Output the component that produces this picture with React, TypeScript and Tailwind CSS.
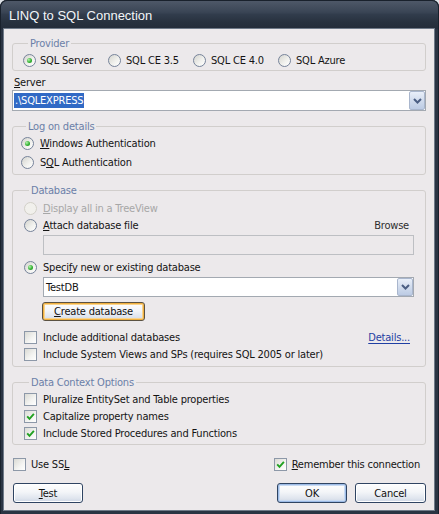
import React from "react";

const UI_FONT = "font-['DejaVu_Sans_Condensed','Liberation_Sans',sans-serif]";

function Radio({ checked = false, disabled = false }: { checked?: boolean; disabled?: boolean }) {
  if (disabled) {
    return <span className="block h-[13px] w-[13px] shrink-0 rounded-full border border-[#d2d0c8] bg-[#f1f0ec]" />;
  }
  return (
    <span className="flex h-[13px] w-[13px] shrink-0 items-center justify-center rounded-full border border-[#76839a] bg-[linear-gradient(135deg,#d4d4ce_0%,#f2f2ef_60%,#ffffff_100%)]">
      {checked && (
        <span className="h-[5px] w-[5px] rounded-full bg-[radial-gradient(circle_at_35%_35%,#b6f3ae_0%,#34b234_55%,#1b8c1b_100%)]" />
      )}
    </span>
  );
}

function Check({ checked = false }: { checked?: boolean }) {
  return (
    <span className="flex h-[13px] w-[13px] shrink-0 items-center justify-center border border-[#8d98a8] bg-[linear-gradient(135deg,#dadad4_0%,#f4f4f2_60%,#ffffff_100%)]">
      {checked && (
        <svg width="9" height="9" viewBox="0 0 9 9">
          <path d="M1.2 4.4 L3.5 6.8 L7.9 1.9" fill="none" stroke="#21a121" strokeWidth="1.9" />
        </svg>
      )}
    </span>
  );
}

function Key({ children }: { children: React.ReactNode }) {
  return <span className="underline decoration-1 underline-offset-[1px]">{children}</span>;
}

function Group({
  title,
  className,
  children,
}: {
  title: string;
  className: string;
  children: React.ReactNode;
}) {
  return (
    <fieldset className={`rounded-[3px] border border-[#d1cecc] ${className}`}>
      <legend className="ml-[5px] px-[2px] leading-[13px] text-[#6b7fa8]">{title}</legend>
      {children}
    </fieldset>
  );
}

function DropArrow() {
  return (
    <div className="flex w-[16px] items-center justify-center rounded-[2px] border border-[#a9b6cd] bg-[linear-gradient(#e9eff9,#cfdaec_55%,#bccbe4)]">
      <svg width="9" height="6" viewBox="0 0 9 6">
        <polyline points="1,1 4.5,4.5 8,1" fill="none" stroke="#4b5e83" strokeWidth="2" />
      </svg>
    </div>
  );
}

function Combo({ h, children }: { h: string; children: React.ReactNode }) {
  return (
    <div className={`flex ${h} items-stretch border border-[#a3a9b1] bg-white`}>
      <div className="flex flex-1 items-center pl-[1px]">{children}</div>
      <DropArrow />
    </div>
  );
}

function Button({
  children,
  width,
  variant = "normal",
}: {
  children: React.ReactNode;
  width: string;
  variant?: "normal" | "default" | "hot";
}) {
  const inner =
    variant === "default"
      ? "shadow-[inset_0_0_0_1px_#9dbbe6,inset_0_0_0_2px_#c9dbf3]"
      : variant === "hot"
        ? "shadow-[inset_0_0_0_1px_#f0b040,inset_0_0_0_2px_#f9d590]"
        : "shadow-[inset_0_0_0_1px_#ffffff]";
  const border = variant === "hot" ? "border-[#5b5242]" : "border-[#2f4462]";
  return (
    <div
      className={`flex h-full ${width} items-center justify-center rounded-[3px] border ${border} ${inner} bg-[linear-gradient(#fefefe_0%,#f3f5f8_45%,#dfe5ee_80%,#cdd6e4_100%)] text-[#111]`}
    >
      {children}
    </div>
  );
}

export default function App() {
  return (
    <div className={`h-[514px] w-[439px] bg-[#dde1e6] ${UI_FONT}`}>
      <div className="flex h-full w-full flex-col rounded-t-[7px] bg-[#2a3443] pb-[4px] pl-[4px] pr-[5px] shadow-[inset_1px_0_0_#19212c,inset_-1px_0_0_#19212c]">
        {/* caption */}
        <div className="-mx-[4px] -mr-[5px] flex h-[29px] shrink-0 items-center rounded-t-[7px] border-x border-t border-[#19212c] bg-[linear-gradient(#4e5868_0%,#3a4555_40%,#313c4c_48%,#28323f_75%,#242d3a_100%)] pl-[8px] pt-[2px]">
          <span className="font-['Liberation_Sans',sans-serif] text-[13px] leading-[16px] text-[#f2f5f8]">
            LINQ to SQL Connection
          </span>
        </div>

        {/* client area */}
        <div className="flex flex-1 flex-col bg-[#ece9eb] px-[8px] pb-[7px] pt-[8px] text-[11px] leading-[13px] tracking-[-0.2px] text-[#141414] shadow-[0_0_0_1px_#6f7a88]">
          <Group title="Provider" className="pb-[2px] pl-[10px] pt-[3px]">
            <div className="flex h-[15px] items-center">
              <label className="flex w-[85px] items-center gap-[4px]">
                <Radio checked />
                <span>SQL Server</span>
              </label>
              <label className="flex w-[85px] items-center gap-[5px]">
                <Radio />
                <span>SQL CE 3.5</span>
              </label>
              <label className="flex w-[85px] items-center gap-[5px]">
                <Radio />
                <span>SQL CE 4.0</span>
              </label>
              <label className="flex items-center gap-[5px]">
                <Radio />
                <span>SQL Azure</span>
              </label>
            </div>
          </Group>

          <div className="ml-[2px] mt-[5px] h-[13px]">
            <Key>S</Key>erver
          </div>
          <div className="mt-[1px]">
            <Combo h="h-[21px]">
              <span className="bg-[#316ac5] px-[1px] leading-[15px] text-white">.\SQLEXPRESS</span>
            </Combo>
          </div>

          <Group title="Log on details" className="mt-[9px] pb-[3px] pl-[8px] pt-[2px]">
            <div className="flex flex-col gap-[2px]">
              <label className="flex h-[17px] items-center gap-[6px]">
                <Radio checked />
                <span>
                  <Key>W</Key>indows Authentication
                </span>
              </label>
              <label className="flex h-[17px] items-center gap-[6px]">
                <Radio />
                <span>
                  S<Key>Q</Key>L Authentication
                </span>
              </label>
            </div>
          </Group>

          <Group title="Database" className="mt-[9px] pb-[3px] pl-[11px] pr-[11px] pt-[3px]">
            <label className="flex h-[17px] items-center gap-[6px] text-[#a7a7a7]">
              <Radio disabled />
              <span>
                <Key>D</Key>isplay all in a TreeView
              </span>
            </label>
            <div className="flex h-[17px] items-center justify-between">
              <label className="flex items-center gap-[6px]">
                <Radio />
                <span>
                  <Key>A</Key>ttach database file
                </span>
              </label>
              <span className="mr-[5px] text-[#2e2e2e]">Browse</span>
            </div>
            <div className="ml-[19px] mt-[1px] h-[20px] border border-[#bdbfc3]" />

            <label className="mt-[4px] flex h-[17px] items-center gap-[6px]">
              <Radio checked />
              <span>
                Speci<Key>f</Key>y new or existing database
              </span>
            </label>
            <div className="ml-[19px] mt-[1px]">
              <Combo h="h-[20px]">
                <span className="pl-[1px]">TestDB</span>
              </Combo>
            </div>
            <div className="ml-[18px] mt-[5px] h-[19px]">
              <Button width="w-[103px]" variant="hot">
                <span>
                  <Key>C</Key>reate database
                </span>
              </Button>
            </div>

            <div className="mt-[8px] flex h-[17px] items-center justify-between">
              <label className="flex items-center gap-[6px]">
                <Check />
                <span>Include additional databases</span>
              </label>
              <span className="mr-[4px] text-[#1f3fa3] underline decoration-1 underline-offset-[2px]">Details...</span>
            </div>
            <label className="flex h-[17px] items-center gap-[6px]">
              <Check />
              <span>Include System Views and SPs (requires SQL 2005 or later)</span>
            </label>
          </Group>

          <Group title="Data Context Options" className="mt-[9px] pb-[2px] pl-[11px] pt-[2px]">
            <label className="flex h-[17px] items-center gap-[6px]">
              <Check />
              <span>Pluralize EntitySet and Table properties</span>
            </label>
            <label className="flex h-[17px] items-center gap-[6px]">
              <Check checked />
              <span>Capitalize property names</span>
            </label>
            <label className="flex h-[17px] items-center gap-[6px]">
              <Check checked />
              <span>Include Stored Procedures and Functions</span>
            </label>
          </Group>

          <div className="mt-[11px] flex h-[17px] items-center justify-between">
            <label className="ml-[1px] flex items-center gap-[5px]">
              <Check />
              <span>
                Use SS<Key>L</Key>
              </span>
            </label>
            <label className="mr-[6px] flex items-center gap-[5px]">
              <Check checked />
              <span>
                <Key>R</Key>emember this connection
              </span>
            </label>
          </div>

          <div className="mt-[10px] flex h-[20px] items-stretch">
            <div className="ml-[1px]">
              <Button width="w-[70px]">
                <span>
                  <Key>T</Key>est
                </span>
              </Button>
            </div>
            <div className="ml-auto">
              <Button width="w-[70px]" variant="default">
                OK
              </Button>
            </div>
            <div className="ml-[8px]">
              <Button width="w-[71px]">Cancel</Button>
            </div>
          </div>
        </div>
      </div>
    </div>
  );
}
